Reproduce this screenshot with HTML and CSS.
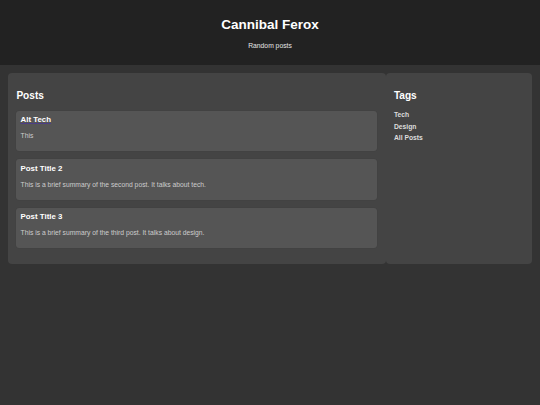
FILE: index.html
```html
<!DOCTYPE html>
<html lang="en">
<head>
<meta charset="utf-8">
<title>Cannibal Ferox</title>
<link rel="stylesheet" href="styles.css">
</head>
<body>
<header class="site-header">
  <h1 class="site-title">Cannibal Ferox</h1>
  <p class="site-tagline">Random posts</p>
</header>
<div class="layout">
  <main class="posts">
    <h2 class="section-title">Posts</h2>
    <article class="post">
      <h3 class="post-title"><a class="post-link" href="#">Alt Tech</a></h3>
      <p class="post-summary">This</p>
    </article>
    <article class="post">
      <h3 class="post-title">Post Title 2</h3>
      <p class="post-summary">This is a brief summary of the second post. It talks about tech.</p>
    </article>
    <article class="post">
      <h3 class="post-title">Post Title 3</h3>
      <p class="post-summary">This is a brief summary of the third post. It talks about design.</p>
    </article>
  </main>
  <aside class="sidebar">
    <h2 class="section-title">Tags</h2>
    <ul class="tag-list">
      <li class="tag-item">Tech</li>
      <li class="tag-item">Design</li>
      <li class="tag-item">All Posts</li>
    </ul>
  </aside>
</div>
</body>
</html>
```
FILE: styles.css
```css
html, body {
  margin: 0;
  padding: 0;
}
body {
  background: #333333;
  color: #dddddd;
  font-family: "Liberation Sans", Arial, sans-serif;
  font-size: 6.75px;
  width: 540px;
  height: 405px;
}
.site-header {
  background: #222222;
  text-align: center;
  padding: 8.4px 0;
  height: 65px;
  box-sizing: border-box;
}
.site-title {
  color: #ffffff;
  font-size: 13.5px;
  line-height: 15.5px;
  font-weight: bold;
  margin: 9px 0 9.5px;
}
.site-tagline {
  color: #e6e6e6;
  font-size: 6.75px;
  line-height: 8px;
  margin: 0;
}
.layout {
  display: grid;
  grid-template-columns: 377.5px 146.5px;
  margin: 8px 8px 0;
}
.posts, .sidebar {
  background: #444444;
  border-radius: 4px;
  padding: 8.4px;
  height: 191px;
  box-sizing: border-box;
}
.section-title {
  color: #ffffff;
  font-size: 10.1px;
  line-height: 12px;
  font-weight: bold;
  margin: 9px 0 8.4px;
}
.post {
  background: #555555;
  border-radius: 3px;
  padding: 4.2px;
  margin-bottom: 8.4px;
  height: 40.2px;
  box-sizing: border-box;
  box-shadow: 0 0 1px rgba(0,0,0,0.2);
}
.post-title {
  color: #ffffff;
  font-size: 7.86px;
  line-height: 9.4px;
  font-weight: bold;
  margin: 0 0 7.86px;
}
.post-link {
  color: #ffffff;
  text-decoration: underline;
  text-decoration-color: #4b3d86;
  text-decoration-thickness: 1px;
  text-underline-offset: 1px;
}
.post-summary {
  color: #cccccc;
  font-size: 6.75px;
  line-height: 8px;
  margin: 0;
}
.tag-list {
  list-style: none;
  margin: 0;
  padding: 0;
}
.tag-item {
  color: #dddddd;
  font-weight: bold;
  font-size: 6.75px;
  line-height: 7.6px;
  margin-bottom: 4.2px;
}
```
